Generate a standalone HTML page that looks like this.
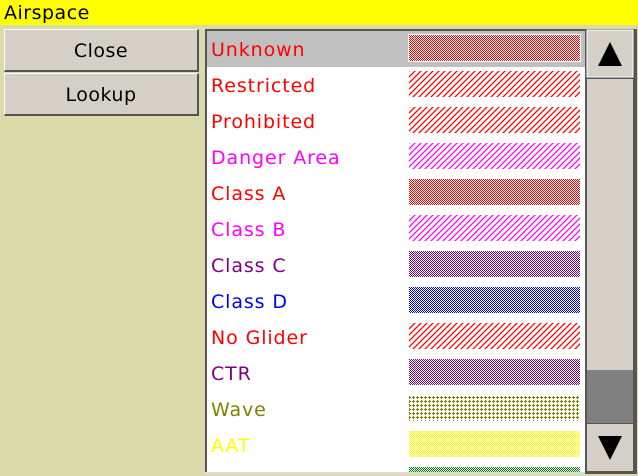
<!DOCTYPE html><html><head><style>
body{margin:0;width:638px;height:476px;background:#dadaab;font-family:"DejaVu Sans","Liberation Sans",sans-serif;position:relative;overflow:hidden}
.t{position:absolute;left:0;top:0;width:638px;height:25px;background:#ffff00;font-size:19px;line-height:27px;padding-left:4px;box-sizing:border-box;letter-spacing:0.5px}
.b{position:absolute;left:4px;width:195px;height:43px;background:#d4d0c8;border:1px solid #fff;border-right:2px solid #555;border-bottom:2px solid #555;box-sizing:border-box;text-align:center;font-size:19px;line-height:42px;letter-spacing:0.5px}
</style></head><body>
<div class="t">Airspace</div>
<div class="b" style="top:29px">Close</div>
<div class="b" style="top:73px">Lookup</div>
<svg style="position:absolute;left:0;top:0" width="638" height="476">
<defs>
<pattern id="cr" width="2" height="2" patternUnits="userSpaceOnUse"><rect width="2" height="2" fill="#fff"/><rect width="1" height="1" fill="#f00"/><rect x="1" y="1" width="1" height="1" fill="#f00"/></pattern>
<pattern id="cp" width="2" height="2" patternUnits="userSpaceOnUse"><rect width="2" height="2" fill="#fff"/><rect width="1" height="1" fill="#800080"/><rect x="1" y="1" width="1" height="1" fill="#800080"/></pattern>
<pattern id="cb" width="2" height="2" patternUnits="userSpaceOnUse"><rect width="2" height="2" fill="#fff"/><rect width="1" height="1" fill="#00f"/><rect x="1" y="1" width="1" height="1" fill="#00f"/></pattern>
<pattern id="cy" width="2" height="2" patternUnits="userSpaceOnUse"><rect width="2" height="2" fill="#fff"/><rect width="1" height="1" fill="#ff0"/><rect x="1" y="1" width="1" height="1" fill="#ff0"/></pattern>
<pattern id="cg" width="2" height="2" patternUnits="userSpaceOnUse"><rect width="2" height="2" fill="#fff"/><rect width="1" height="1" fill="#080"/><rect x="1" y="1" width="1" height="1" fill="#080"/></pattern>
<pattern id="hr" width="6" height="6" patternUnits="userSpaceOnUse"><path d="M0 6L6 0M-1 1L1 -1M5 7L7 5" stroke="#f00" stroke-width="1.3"/></pattern>
<pattern id="hm" width="6" height="6" patternUnits="userSpaceOnUse"><path d="M0 6L6 0M-1 1L1 -1M5 7L7 5" stroke="#f0f" stroke-width="1.3"/></pattern>
<pattern id="dw" width="4" height="4" patternUnits="userSpaceOnUse"><rect width="4" height="4" fill="#fff"/><rect x="1" y="0" width="1" height="1" fill="#808000"/><rect x="0" y="1" width="3" height="1" fill="#808000"/><rect x="1" y="2" width="1" height="1" fill="#808000"/></pattern>
</defs>
<rect x="205" y="29" width="381" height="444" fill="#fff"/>
<rect x="205" y="29" width="2" height="444" fill="#555"/>
<rect x="205" y="29" width="381" height="2" fill="#555"/>
<rect x="205" y="472" width="381" height="2" fill="#ddd"/>
<rect x="207" y="31" width="378" height="36" fill="#c0c0c0"/>
<g font-size="19" letter-spacing="0.9" font-family="DejaVu Sans,Liberation Sans,sans-serif">
<text x="211" y="56" fill="#f00">Unknown</text>
<text x="211" y="92" fill="#f00">Restricted</text>
<text x="211" y="128" fill="#f00">Prohibited</text>
<text x="211" y="164" fill="#f0f">Danger Area</text>
<text x="211" y="200" fill="#f00">Class A</text>
<text x="211" y="236" fill="#f0f">Class B</text>
<text x="211" y="272" fill="#800080">Class C</text>
<text x="211" y="308" fill="#00f">Class D</text>
<text x="211" y="344" fill="#f00">No Glider</text>
<text x="211" y="380" fill="#800080">CTR</text>
<text x="211" y="416" fill="#808000">Wave</text>
<text x="211" y="452" fill="#ff0">AAT</text>
</g>
<rect x="408" y="34" width="173" height="28" fill="#fff"/>
<rect x="409" y="35" width="171" height="26" fill="url(#cr)"/>
<rect x="409" y="71" width="171" height="26" fill="url(#hr)"/>
<rect x="409" y="107" width="171" height="26" fill="url(#hr)"/>
<rect x="409" y="143" width="171" height="26" fill="url(#hm)"/>
<rect x="409" y="179" width="171" height="26" fill="url(#cr)"/>
<rect x="409" y="215" width="171" height="26" fill="url(#hm)"/>
<rect x="409" y="251" width="171" height="26" fill="url(#cp)"/>
<rect x="409" y="287" width="171" height="26" fill="url(#cb)"/>
<rect x="409" y="323" width="171" height="26" fill="url(#hr)"/>
<rect x="409" y="359" width="171" height="26" fill="url(#cp)"/>
<rect x="409" y="395" width="171" height="26" fill="url(#dw)"/>
<rect x="409" y="431" width="171" height="26" fill="url(#cy)"/>
<rect x="409" y="467" width="171" height="5" fill="url(#cg)"/>
<rect x="585" y="29" width="52" height="445" fill="#555"/>
<rect x="587" y="30" width="46" height="47" fill="#d4d0c8" stroke="#fff" stroke-width="1"/>
<rect x="587" y="79" width="46" height="291" fill="#d4d0c8"/>
<rect x="587" y="370" width="46" height="53" fill="#808080"/>
<rect x="587" y="424" width="46" height="47" fill="#d4d0c8"/>
<polygon points="598,66 622,66 610,42" fill="#000"/>
<polygon points="598,436 622,436 610,460" fill="#000"/>
</svg>
</body></html>
